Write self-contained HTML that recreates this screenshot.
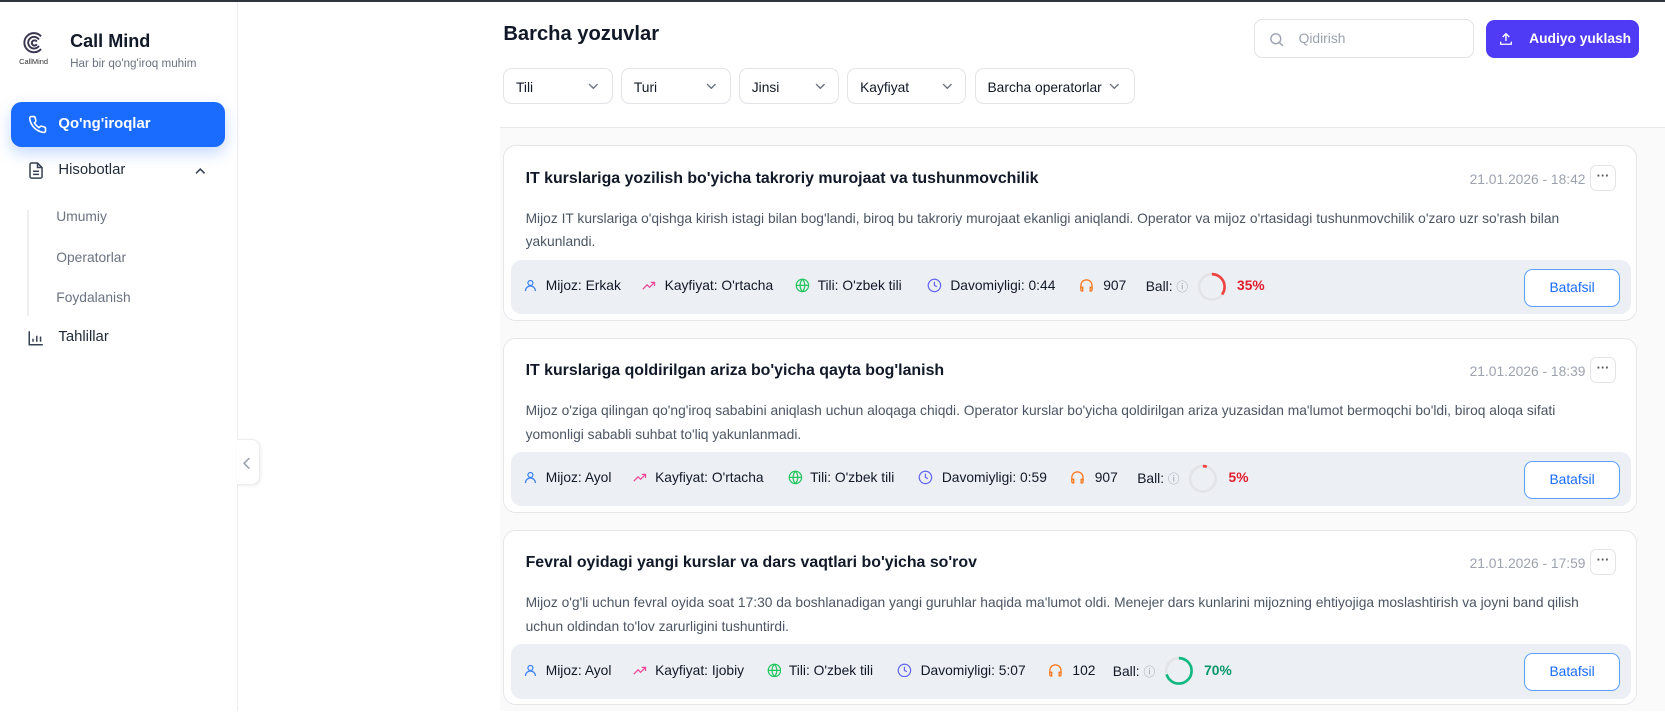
<!DOCTYPE html>
<html><head><meta charset="utf-8"><style>
*{box-sizing:border-box;margin:0;padding:0}
html,body{width:1665px;height:712px;overflow:hidden;background:#fff}
#w{zoom:1.0619;width:1568px;height:670px;position:relative;overflow:hidden;font-family:"Liberation Sans",sans-serif;color:#111827}
.top{position:absolute;left:0;top:0;width:1568px;height:2px;background:#2f3441}
.side{position:absolute;left:0;top:2px;width:224px;height:710px;border-right:1px solid #ececef;background:#fff}
.a{position:absolute}
.nav{position:absolute;left:10px;top:94px;width:202px;height:42px;border-radius:10px;background:#1a6bff;box-shadow:0 6px 14px rgba(26,107,255,.25);color:#fff;font-size:14px;font-weight:bold}
.grey{position:absolute;left:471px;top:120px;right:0;bottom:0;background:#fafafa;border-top:1px solid #e8e8ea}
.sel{position:absolute;top:64px;height:34px;border:1px solid #e3e4e8;border-radius:8px;background:#fff;font-size:13px;padding:10px 0 0 11px}
.sel svg{position:absolute;right:12px;top:13px}
.card{position:absolute;left:474px;width:1068px;height:165px;background:#fff;border:1px solid #e5e6ea;border-radius:12px}
.card h3{position:absolute;left:20px;top:22px;font-size:15px;font-weight:bold}
.card .d{position:absolute;right:48px;top:24px;font-size:13px;color:#9ca3af}
.card .m{position:absolute;right:19px;top:17px;width:25px;height:25px;border:1px solid #e3e4e8;border-radius:6px;text-align:center;font-size:12px;line-height:18px;color:#555;font-weight:bold}
.card p{position:absolute;left:20px;top:57px;width:1022px;font-size:13px;line-height:22px;color:#4b5563}
.bar{position:absolute;left:6px;top:107px;width:1055px;height:51px;background:#eceff3;border-radius:10px;font-size:13px}
.bar span{position:absolute;top:17px;white-space:nowrap}
.bar svg{position:absolute;top:17px}
.btn{position:absolute;right:10px;top:8px;width:91px;height:36px;border:1px solid #5ea0f5;border-radius:8px;background:#fff;color:#1a6bff;font-size:13px;text-align:center;line-height:34px}
</style></head><body><div id="w">
<div class="top"></div>
<div class="side">
 <svg class="a" style="left:22px;top:27px" width="22" height="22" viewBox="0 0 22 22" fill="none" stroke="#3a3550" stroke-width="1.8"><path d="M17 5a9 9 0 1 0 0 12"/><path d="M15 8a5.5 5.5 0 1 0 0 6"/><path d="M13 10a2.5 2.5 0 1 0 0 2.5"/></svg>
 <div class="a" style="left:18px;top:52px;font-size:7px;color:#333">CallMind</div>
 <div class="a" style="left:66px;top:27px;font-size:17px;font-weight:bold">Call Mind</div>
 <div class="a" style="left:66px;top:52px;font-size:11px;color:#6b7280">Har bir qo'ng'iroq muhim</div>
 <div class="nav"><svg class="a" style="left:16px;top:12px" width="18" height="18" viewBox="0 0 24 24" fill="none" stroke="#fff" stroke-width="2"><path d="M22 16.9v3a2 2 0 0 1-2.2 2 19.8 19.8 0 0 1-8.6-3.1 19.5 19.5 0 0 1-6-6A19.8 19.8 0 0 1 2.1 4.2 2 2 0 0 1 4.1 2h3a2 2 0 0 1 2 1.7c.1 1 .4 1.9.7 2.8a2 2 0 0 1-.5 2.1L8 9.9a16 16 0 0 0 6 6l1.3-1.3a2 2 0 0 1 2.1-.4c.9.3 1.8.6 2.8.7a2 2 0 0 1 1.7 2z"/></svg><span class="a" style="left:45px;top:13px">Qo'ng'iroqlar</span></div>
 <svg class="a" style="left:25px;top:150px" width="17" height="18" viewBox="0 0 24 24" fill="none" stroke="#374151" stroke-width="2"><path d="M14 2H6a2 2 0 0 0-2 2v16a2 2 0 0 0 2 2h12a2 2 0 0 0 2-2V8z"/><path d="M14 2v6h6M8 13h8M8 17h8"/></svg>
 <div class="a" style="left:55px;top:151px;font-size:14px;color:#1f2937">Hisobotlar</div>
 <svg class="a" style="left:184px;top:155px" width="10" height="8" viewBox="0 0 10 8" fill="none" stroke="#374151" stroke-width="1.5"><path d="M1 6l4-4 4 4"/></svg>
 <div class="a" style="left:25px;top:196px;width:2px;height:100px;background:#eeeeee"></div>
 <div class="a" style="left:53px;top:195px;font-size:13px;color:#6b7280">Umumiy</div>
 <div class="a" style="left:53px;top:233px;font-size:13px;color:#6b7280">Operatorlar</div>
 <div class="a" style="left:53px;top:271px;font-size:13px;color:#6b7280">Foydalanish</div>
 <svg class="a" style="left:25px;top:308px" width="17" height="17" viewBox="0 0 24 24" fill="none" stroke="#374151" stroke-width="2"><path d="M3 3v18h18M8 17v-4M13 17V9M18 17v-7"/></svg>
 <div class="a" style="left:55px;top:308px;font-size:14px;color:#1f2937">Tahlillar</div>
</div>
<div class="a" style="left:223px;top:413px;width:22px;height:44px;background:#fff;border:1px solid #eee;border-left:none;border-radius:0 8px 8px 0;box-shadow:1px 1px 3px rgba(0,0,0,.06)"><svg class="a" style="left:6px;top:16px" width="8" height="12" viewBox="0 0 8 12" fill="none" stroke="#9ca3af" stroke-width="1.5"><path d="M6 1L1 6l5 5"/></svg></div>
<div class="a" style="left:474px;top:22px;font-size:19px;font-weight:bold">Barcha yozuvlar</div>
<div class="a" style="left:1181px;top:18px;width:207px;height:37px;border:1px solid #e3e4e8;border-radius:8px"><svg class="a" style="left:12px;top:10px" width="16" height="16" viewBox="0 0 24 24" fill="none" stroke="#9ca3af" stroke-width="2"><circle cx="11" cy="11" r="7"/><path d="M21 21l-5-5"/></svg><span class="a" style="left:41px;top:10px;font-size:13px;color:#9ca3af">Qidirish</span></div>
<div class="a" style="left:1399px;top:19px;width:144px;height:36px;border-radius:8px;background:#4f3bf5;color:#fff;font-size:13px;font-weight:bold"><svg class="a" style="left:12px;top:10px" width="15" height="15" viewBox="0 0 24 24" fill="none" stroke="#fff" stroke-width="2"><path d="M4 16v4h16v-4M12 15V4M7 9l5-5 5 5"/></svg><span class="a" style="left:41px;top:10px">Audiyo yuklash</span></div>
<div class="sel" style="left:474px;width:103px">Tili<svg width="10" height="6" viewBox="0 0 10 6" fill="none" stroke="#6b7280" stroke-width="1.3"><path d="M1 1l4 4 4-4"/></svg></div>
<div class="sel" style="left:585px;width:103px">Turi<svg width="10" height="6" viewBox="0 0 10 6" fill="none" stroke="#6b7280" stroke-width="1.3"><path d="M1 1l4 4 4-4"/></svg></div>
<div class="sel" style="left:696px;width:94px">Jinsi<svg width="10" height="6" viewBox="0 0 10 6" fill="none" stroke="#6b7280" stroke-width="1.3"><path d="M1 1l4 4 4-4"/></svg></div>
<div class="sel" style="left:798px;width:112px">Kayfiyat<svg width="10" height="6" viewBox="0 0 10 6" fill="none" stroke="#6b7280" stroke-width="1.3"><path d="M1 1l4 4 4-4"/></svg></div>
<div class="sel" style="left:918px;width:151px">Barcha operatorlar<svg style="right:14px" width="10" height="6" viewBox="0 0 10 6" fill="none" stroke="#6b7280" stroke-width="1.3"><path d="M1 1l4 4 4-4"/></svg></div>
<div class="grey"></div>

<div class="card" style="top:137px">
<h3>IT kurslariga yozilish bo'yicha takroriy murojaat va tushunmovchilik</h3><div class="d">21.01.2026 - 18:42</div><div class="m">···</div>
<p>Mijoz IT kurslariga o'qishga kirish istagi bilan bog'landi, biroq bu takroriy murojaat ekanligi aniqlandi. Operator va mijoz o'rtasidagi tushunmovchilik o'zaro uzr so'rash bilan yakunlandi.</p>
<div class="bar">
<svg style="left:12px" width="14" height="14" viewBox="0 0 24 24" fill="none" stroke="#3b82f6" stroke-width="2"><circle cx="12" cy="8" r="4"/><path d="M4 21a8 8 0 0 1 16 0"/></svg><span style="left:33px">Mijoz: Erkak</span>
<svg style="left:123px" width="15" height="14" viewBox="0 0 24 24" fill="none" stroke="#ec4899" stroke-width="2"><path d="M2 18l7-7 4 4 8-8M15 7h6v6"/></svg><span style="left:145px">Kayfiyat: O'rtacha</span>
<svg style="left:268px" width="14" height="14" viewBox="0 0 24 24" fill="none" stroke="#22c55e" stroke-width="2"><circle cx="12" cy="12" r="10"/><path d="M2 12h20M12 2a15 15 0 0 1 0 20M12 2a15 15 0 0 0 0 20"/></svg><span style="left:289px">Tili: O'zbek tili</span>
<svg style="left:392px" width="14" height="14" viewBox="0 0 24 24" fill="none" stroke="#6366f1" stroke-width="2"><circle cx="12" cy="12" r="10"/><path d="M12 6v6l4 2"/></svg><span style="left:414px">Davomiyligi: 0:44</span>
<svg style="left:535px" width="14" height="14" viewBox="0 0 24 24" fill="none" stroke="#f97316" stroke-width="2"><path d="M3 18v-6a9 9 0 0 1 18 0v6"/><path d="M21 19a2 2 0 0 1-2 2h-1v-6h3zM3 19a2 2 0 0 0 2 2h1v-6H3z"/></svg><span style="left:558px">907</span>
<span style="left:598px">Ball: <span style="position:static;color:#9ca3af;font-size:11px">ⓘ</span></span>
<svg style="left:646px;top:11px" width="28" height="28" viewBox="0 0 28 28"><circle cx="14" cy="14" r="12" fill="none" stroke="#e2e4e8" stroke-width="2.5"/><circle cx="14" cy="14" r="12" fill="none" stroke="#ef4444" stroke-width="2.5" stroke-dasharray="26.4 100" transform="rotate(-90 14 14)"/></svg><span style="left:684px;color:#e11d2e;font-weight:bold">35%</span>
<div class="btn">Batafsil</div></div></div>

<div class="card" style="top:318px">
<h3>IT kurslariga qoldirilgan ariza bo'yicha qayta bog'lanish</h3><div class="d">21.01.2026 - 18:39</div><div class="m">···</div>
<p>Mijoz o'ziga qilingan qo'ng'iroq sababini aniqlash uchun aloqaga chiqdi. Operator kurslar bo'yicha qoldirilgan ariza yuzasidan ma'lumot bermoqchi bo'ldi, biroq aloqa sifati yomonligi sababli suhbat to'liq yakunlanmadi.</p>
<div class="bar">
<svg style="left:12px" width="14" height="14" viewBox="0 0 24 24" fill="none" stroke="#3b82f6" stroke-width="2"><circle cx="12" cy="8" r="4"/><path d="M4 21a8 8 0 0 1 16 0"/></svg><span style="left:33px">Mijoz: Ayol</span>
<svg style="left:114px" width="15" height="14" viewBox="0 0 24 24" fill="none" stroke="#ec4899" stroke-width="2"><path d="M2 18l7-7 4 4 8-8M15 7h6v6"/></svg><span style="left:136px">Kayfiyat: O'rtacha</span>
<svg style="left:261px" width="14" height="14" viewBox="0 0 24 24" fill="none" stroke="#22c55e" stroke-width="2"><circle cx="12" cy="12" r="10"/><path d="M2 12h20M12 2a15 15 0 0 1 0 20M12 2a15 15 0 0 0 0 20"/></svg><span style="left:282px">Tili: O'zbek tili</span>
<svg style="left:384px" width="14" height="14" viewBox="0 0 24 24" fill="none" stroke="#6366f1" stroke-width="2"><circle cx="12" cy="12" r="10"/><path d="M12 6v6l4 2"/></svg><span style="left:406px">Davomiyligi: 0:59</span>
<svg style="left:527px" width="14" height="14" viewBox="0 0 24 24" fill="none" stroke="#f97316" stroke-width="2"><path d="M3 18v-6a9 9 0 0 1 18 0v6"/><path d="M21 19a2 2 0 0 1-2 2h-1v-6h3zM3 19a2 2 0 0 0 2 2h1v-6H3z"/></svg><span style="left:550px">907</span>
<span style="left:590px">Ball: <span style="position:static;color:#9ca3af;font-size:11px">ⓘ</span></span>
<svg style="left:638px;top:11px" width="28" height="28" viewBox="0 0 28 28"><circle cx="14" cy="14" r="12" fill="none" stroke="#e2e4e8" stroke-width="2.5"/><circle cx="14" cy="14" r="12" fill="none" stroke="#ef4444" stroke-width="2.5" stroke-dasharray="3.8 100" transform="rotate(-90 14 14)"/></svg><span style="left:676px;color:#e11d2e;font-weight:bold">5%</span>
<div class="btn">Batafsil</div></div></div>

<div class="card" style="top:499px">
<h3>Fevral oyidagi yangi kurslar va dars vaqtlari bo'yicha so'rov</h3><div class="d">21.01.2026 - 17:59</div><div class="m">···</div>
<p>Mijoz o'g'li uchun fevral oyida soat 17:30 da boshlanadigan yangi guruhlar haqida ma'lumot oldi. Menejer dars kunlarini mijozning ehtiyojiga moslashtirish va joyni band qilish uchun oldindan to'lov zarurligini tushuntirdi.</p>
<div class="bar">
<svg style="left:12px" width="14" height="14" viewBox="0 0 24 24" fill="none" stroke="#3b82f6" stroke-width="2"><circle cx="12" cy="8" r="4"/><path d="M4 21a8 8 0 0 1 16 0"/></svg><span style="left:33px">Mijoz: Ayol</span>
<svg style="left:114px" width="15" height="14" viewBox="0 0 24 24" fill="none" stroke="#ec4899" stroke-width="2"><path d="M2 18l7-7 4 4 8-8M15 7h6v6"/></svg><span style="left:136px">Kayfiyat: Ijobiy</span>
<svg style="left:241px" width="14" height="14" viewBox="0 0 24 24" fill="none" stroke="#22c55e" stroke-width="2"><circle cx="12" cy="12" r="10"/><path d="M2 12h20M12 2a15 15 0 0 1 0 20M12 2a15 15 0 0 0 0 20"/></svg><span style="left:262px">Tili: O'zbek tili</span>
<svg style="left:364px" width="14" height="14" viewBox="0 0 24 24" fill="none" stroke="#6366f1" stroke-width="2"><circle cx="12" cy="12" r="10"/><path d="M12 6v6l4 2"/></svg><span style="left:386px">Davomiyligi: 5:07</span>
<svg style="left:506px" width="14" height="14" viewBox="0 0 24 24" fill="none" stroke="#f97316" stroke-width="2"><path d="M3 18v-6a9 9 0 0 1 18 0v6"/><path d="M21 19a2 2 0 0 1-2 2h-1v-6h3zM3 19a2 2 0 0 0 2 2h1v-6H3z"/></svg><span style="left:529px">102</span>
<span style="left:567px">Ball: <span style="position:static;color:#9ca3af;font-size:11px">ⓘ</span></span>
<svg style="left:615px;top:11px" width="28" height="28" viewBox="0 0 28 28"><circle cx="14" cy="14" r="12" fill="none" stroke="#e2e4e8" stroke-width="2.5"/><circle cx="14" cy="14" r="12" fill="none" stroke="#10b981" stroke-width="2.5" stroke-dasharray="52.8 100" transform="rotate(-90 14 14)"/></svg><span style="left:653px;color:#059669;font-weight:bold">70%</span>
<div class="btn">Batafsil</div></div></div>
</div></body></html>
